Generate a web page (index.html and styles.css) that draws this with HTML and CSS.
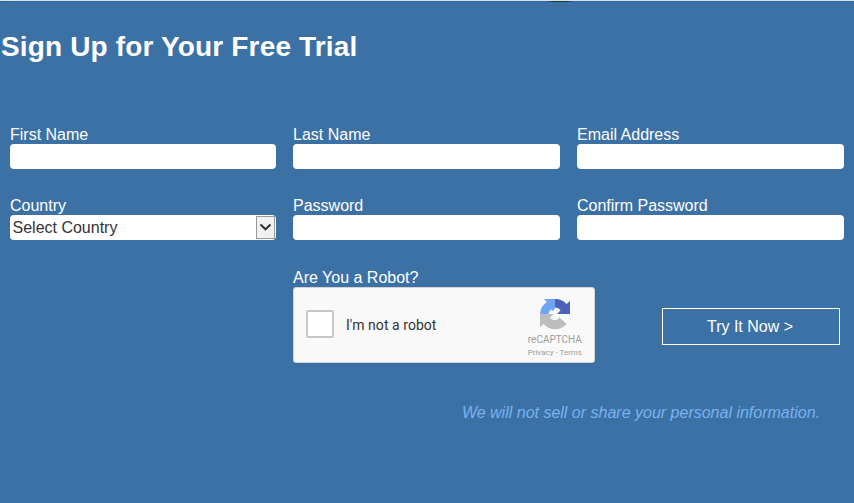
FILE: index.html
```html
<!DOCTYPE html>
<html lang="en">
<head>
<meta charset="utf-8">
<title>Sign Up for Your Free Trial</title>
<link rel="stylesheet" href="styles.css">
</head>
<body>
<main class="signup">
  <h1 class="title">Sign Up for Your Free Trial</h1>
  <form class="form">
    <label class="field"><span class="label">First Name</span><input class="control" type="text"></label>
    <label class="field"><span class="label">Last Name</span><input class="control" type="text"></label>
    <label class="field"><span class="label">Email Address</span><input class="control" type="email"></label>
    <div class="field">
      <span class="label">Country</span>
      <div class="control select">
        <span>Select Country</span>
        <span class="arrow"><svg width="13" height="9" viewBox="0 0 13 9"><path d="M1.500 1.500 6.500 6.300 11.500 1.500" fill="none" stroke="#333" stroke-width="2"/></svg></span>
      </div>
    </div>
    <label class="field"><span class="label">Password</span><input class="control" type="password"></label>
    <label class="field"><span class="label">Confirm Password</span><input class="control" type="password"></label>
    <div class="field robot">
      <span class="label">Are You a Robot?</span>
      <div class="captcha">
        <span class="box"></span>
        <span class="captcha-text">I'm not a robot</span>
        <div class="brand">
          <svg class="logo" width="32" height="32" viewBox="0 0 32 32">
            <path d="M16 1H5L8 4A15 15 0 0 0 1 16H9.500C10 13.500 11 12 12.500 11.500L14 13L16 10Z" fill="#70a5f6"/>
            <path d="M16 1A15 15 0 0 1 27.500 6L31 3V16H18L21.500 12.500C20 10.500 18.500 9.600 16 9.600Z" fill="#4a62b8"/>
            <path d="M1 16H14.500L11 19.500C13.500 23.500 18.500 22.500 20.500 19.500L27.500 26A15 15 0 0 1 4.500 26L1 29.500Z" fill="#bdbdbd"/>
          </svg>
          <span class="name">reCAPTCHA</span>
          <span class="terms">Privacy - Terms</span>
        </div>
      </div>
    </div>
    <button class="submit" type="button">Try It Now &gt;</button>
  </form>
  <p class="note">We will not sell or share your personal information.</p>
</main>
</body>
</html>
```
FILE: styles.css
```css
* { box-sizing: border-box; }
body {
  margin: 0;
  background: #3c71a6;
  color: #fff;
  font: 16px/18px "Liberation Sans", Arial, sans-serif;
}
.signup {
  height: 503px;
  overflow: hidden;
  border-top: 1px solid #d3e5ee;
  background: linear-gradient(90deg, #3d5e72, #3b6b98 12px, #3b6b98 545px, #1e2f38 555px, #1e2f38 565px, #3b6b98 575px) no-repeat 0 0 / 100% 1px;
}
.title {
  margin: 29px 0 0 1px;
  font-size: 28px;
  line-height: 34px;
  letter-spacing: 0.16px;
}
.form {
  display: grid;
  grid-template-columns: 266px 267px 267px;
  column-gap: 17px;
  row-gap: 28px;
  margin: 62px 10px 0;
}
.field { display: block; min-width: 0; }
.label { display: block; height: 18px; }
.control {
  display: block;
  width: 100%;
  height: 25px;
  padding: 0 3px;
  border: 0;
  border-radius: 4px;
  background: #fff;
  color: #333;
  font: inherit;
}
.select {
  display: flex;
  align-items: center;
  justify-content: space-between;
  padding: 0 1px 0 2.5px;
}
.arrow {
  display: flex;
  align-items: center;
  justify-content: center;
  width: 19px;
  height: 23px;
  border: 1px solid #999;
  background: #f1f1f1;
}
.robot { grid-column: 2; padding-top: 1px; }
.captcha {
  display: flex;
  align-items: center;
  width: 302px;
  height: 76px;
  padding-left: 12px;
  border: 1px solid #d3d3d3;
  border-radius: 3px;
  background: #f9f9f9;
}
.box {
  width: 28px;
  height: 28px;
  margin-bottom: 2px;
  border: 2px solid #c8c8c8;
  border-radius: 2px;
  background: #fff;
}
.captcha-text {
  margin-left: 12px;
  color: #333;
  font: 14px/18px Roboto, sans-serif;
  letter-spacing: 0.05px;
}
.brand {
  display: flex;
  flex-direction: column;
  align-items: center;
  margin: 6px 12px 0 auto;
  color: #a0a0a0;
  font-family: Roboto, sans-serif;
}
.name { margin-top: 3px; font-size: 10px; line-height: 14px; }
.terms { font-size: 8px; line-height: 12px; }
.submit {
  align-self: start;
  justify-self: end;
  width: 178px;
  height: 37px;
  margin: 40px 4px 0 0;
  padding: 0 2px 0 0;
  border: 1px solid #fff;
  background: transparent;
  color: #fff;
  font: inherit;
}
.note {
  margin: 41px 34px 0 0;
  color: #79b2ed;
  font-style: italic;
  text-align: right;
}
```
